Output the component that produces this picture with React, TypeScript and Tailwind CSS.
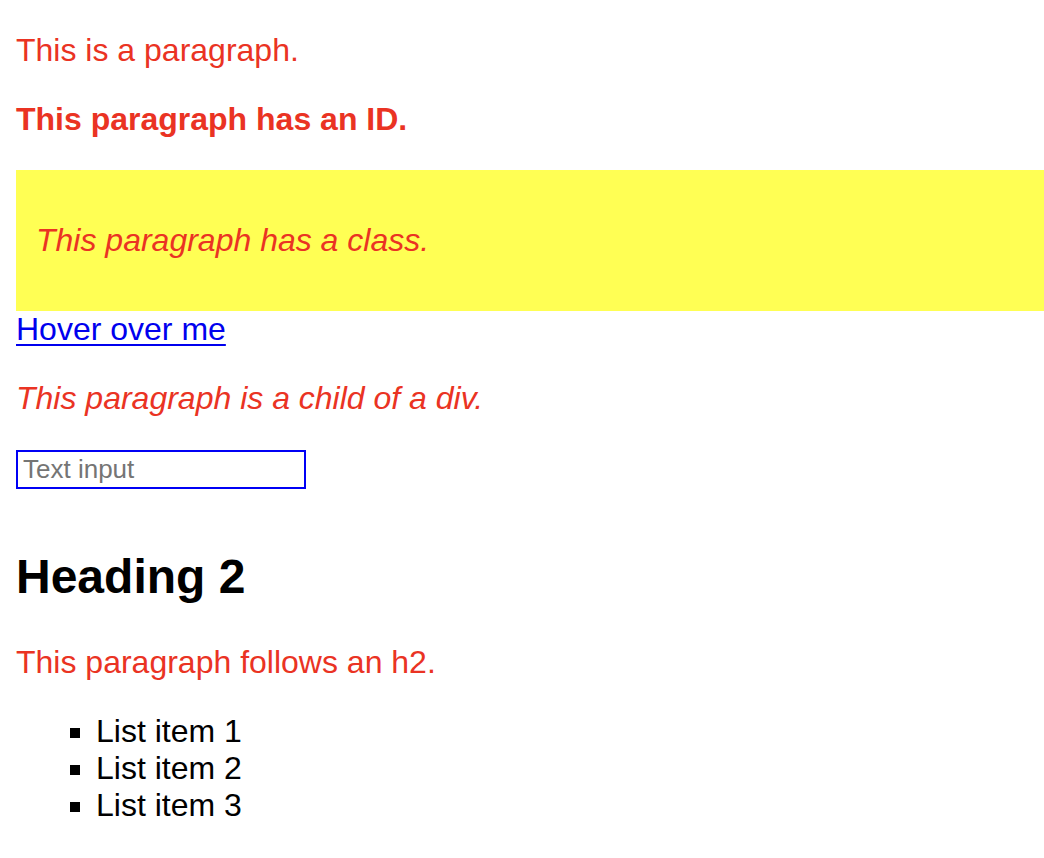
import React from "react";

export default function App() {
  return (
    <div className="min-h-[858px] w-[1044px] overflow-hidden bg-white pl-4 font-['Liberation_Sans',Arial,sans-serif]">
      <p className="mt-[32px] text-[32px] leading-[37px] text-[#ea3323]">This is a paragraph.</p>
      <p className="mt-[32px] text-[32px] font-bold leading-[37px] text-[#ea3323]">This paragraph has an ID.</p>
      <div className="mt-[32px] flex h-[141px] w-[1028px] items-center bg-[#ffff54] pl-[20px]">
        <p className="text-[32px] italic leading-[37px] text-[#ea3323]">This paragraph has a class.</p>
      </div>
      <a href="#" className="block w-fit text-[32px] leading-[37px] text-[#0000ee] underline decoration-[2px] underline-offset-[4px]">
        Hover over me
      </a>
      <div>
        <p className="mt-[32px] text-[32px] italic leading-[37px] text-[#ea3323]">This paragraph is a child of a div.</p>
      </div>
      <input
        type="text"
        placeholder="Text input"
        className="mt-[33px] block h-[39px] w-[290px] border-2 border-[#0000f5] pl-[5px] text-[26px] leading-[30px] text-black placeholder:text-[#757575] outline-none"
      />
      <h2 className="mt-[60px] text-[48px] font-bold leading-[55px] text-black">Heading 2</h2>
      <p className="mt-[40px] text-[32px] leading-[37px] text-[#ea3323]">This paragraph follows an h2.</p>
      <ul className="mt-[32px] list-[square] pl-[80px] text-[32px] leading-[37px] text-black">
        <li>List item 1</li>
        <li>List item 2</li>
        <li>List item 3</li>
      </ul>
    </div>
  );
}
